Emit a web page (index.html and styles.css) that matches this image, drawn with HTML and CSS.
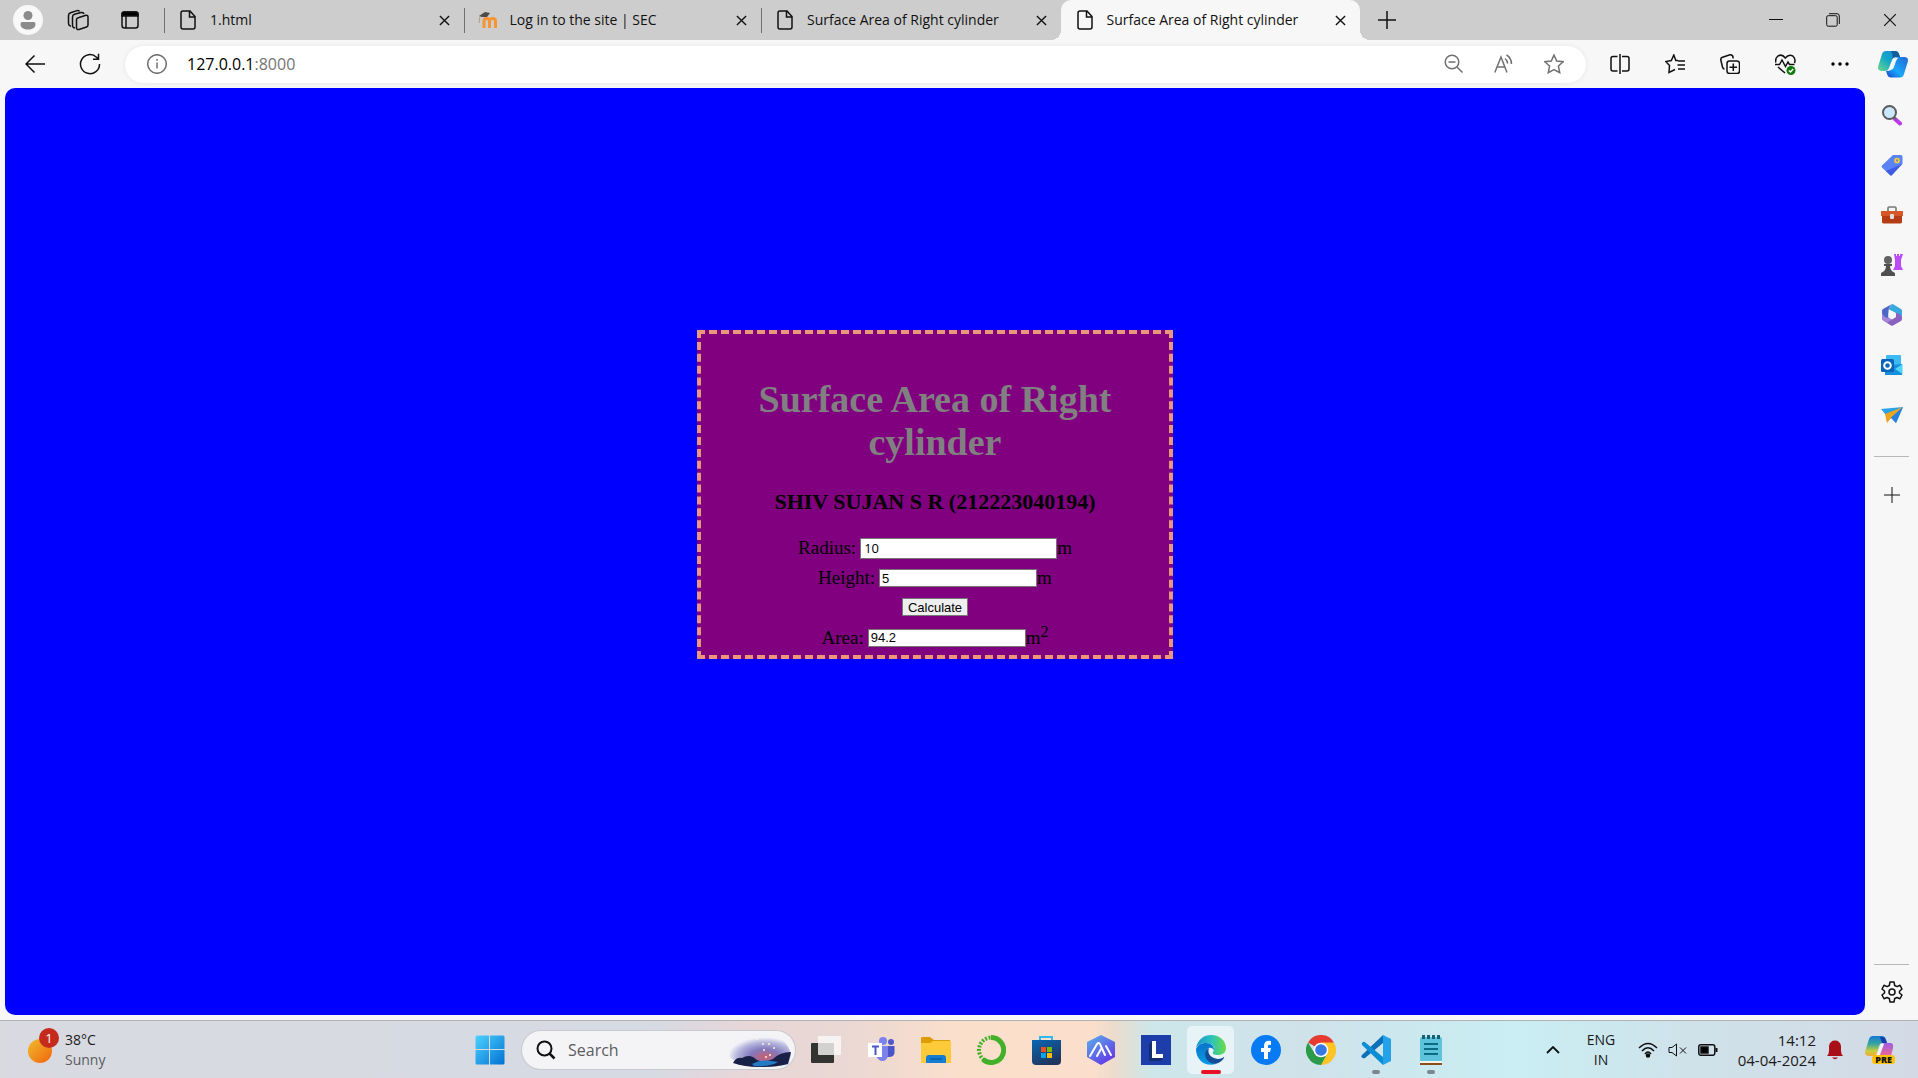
FILE: index.html
```html
<!DOCTYPE html>
<html lang="en">
<head>
<meta charset="utf-8">
<title>Surface Area of Right cylinder</title>
<link rel="stylesheet" href="styles.css">
</head>
<body>
<svg class="defs" aria-hidden="true">
  <symbol id="file" viewBox="0 0 16 20"><path d="M3 1H10L15 6.500V17Q15 19 13 19H3Q1 19 1 17V3Q1 1 3 1ZM9.500 1V7H15"/></symbol>
  <symbol id="cross" viewBox="0 0 12 12"><path d="M1 1 11 11M11 1 1 11"/></symbol>
  <linearGradient id="cp1" x1="0" y1="1" x2="1" y2="0"><stop offset="0" stop-color="#6bd98a"/><stop offset=".5" stop-color="#12a6c9"/><stop offset="1" stop-color="#1689d8"/></linearGradient>
  <linearGradient id="cp2" x1="0" y1="1" x2="1" y2="0"><stop offset="0" stop-color="#1743d1"/><stop offset=".4" stop-color="#19a8f8"/><stop offset="1" stop-color="#2267d4"/></linearGradient>
</svg>

<header class="tabs">
  <div class="tab-tools">
    <button class="profile" aria-label="Profile"><svg width="30" height="30" viewBox="0 0 30 30"><circle cx="15" cy="15" r="15" fill="#f8f8f8"/><circle cx="15" cy="10.500" r="4.500" fill="#8b8b8b"/><path d="M9 17H21Q22.500 17 22.500 19C22.500 23 19 24.500 15 24.500S7.500 23 7.500 19Q7.500 17 9 17Z" fill="#8b8b8b"/></svg></button>
    <button aria-label="Workspaces"><svg class="line" width="22" height="22" viewBox="0 0 22 22"><path d="M12 8.500 19 6.300Q21 6 21 8V16Q21 17.500 19.500 18L12 20.500Q9.500 21 9.500 18.500V10.500Q9.500 9.200 12 8.500ZM8 19 6.500 18.500Q5.500 18 5.500 16V8Q5.500 6 7.500 5.300L14 3.500Q16.500 3 17 5M4 17.500 2.500 16.500Q1.500 16 1.500 14V6.500Q1.500 4.500 3.500 3.800L10 1.600Q12 1 12.500 2.500"/></svg></button>
    <button aria-label="Tab actions"><svg class="line" width="18" height="18" viewBox="0 0 18 18"><rect x="1" y="1" width="16" height="16" rx="2.500"/><path d="M1 3Q1 1 3 1H15Q17 1 17 3V5H1Z" fill="#000"/><path d="M5 5V17"/></svg></button>
  </div>
  <nav class="tab-list">
    <div class="tab"><svg class="line" width="16" height="20"><use href="#file"/></svg><a href="#">1.html</a><button aria-label="Close tab"><svg class="line" width="11" height="11"><use href="#cross"/></svg></button></div>
    <div class="tab"><svg width="20" height="16" viewBox="0 0 20 16"><path d="M6 16V9Q6 6.500 8.500 6.500T11.500 9V16M11.500 16V9Q11.500 6.500 14.500 6.500T17.500 9V16" fill="none" stroke="#f79433" stroke-width="3"/><path d="M1 4 7 0 12 1 9 5 4 5Z" fill="#504b48"/><path d="M2 4 1 11" stroke="#aaa08e"/></svg><a href="#">Log in to the site | SEC</a><button aria-label="Close tab"><svg class="line" width="11" height="11"><use href="#cross"/></svg></button></div>
    <div class="tab"><svg class="line" width="16" height="20"><use href="#file"/></svg><a href="#">Surface Area of Right cylinder</a><button aria-label="Close tab"><svg class="line" width="11" height="11"><use href="#cross"/></svg></button></div>
    <div class="tab active"><svg class="line" width="16" height="20"><use href="#file"/></svg><a href="#">Surface Area of Right cylinder</a><button aria-label="Close tab"><svg class="line" width="11" height="11"><use href="#cross"/></svg></button></div>
  </nav>
  <button class="new-tab" aria-label="New tab"><svg class="line" width="18" height="18" viewBox="0 0 18 18"><path d="M9 0V18M0 9H18"/></svg></button>
  <div class="window-tools">
    <button aria-label="Minimize"><svg class="line thin" width="14" height="14"><path d="M0 6.500H14"/></svg></button>
    <button aria-label="Restore"><svg class="line thin" width="14" height="14" viewBox="0 0 14 14"><rect x=".7" y="2.700" width="10.500" height="10.500" rx="1.500"/><path d="M3 .7H11Q13.300 .7 13.300 3V11"/></svg></button>
    <button aria-label="Close"><svg class="line thin" width="14" height="14"><use href="#cross"/></svg></button>
  </div>
</header>

<div class="toolbar">
  <button class="back" aria-label="Back"><svg class="line" width="20" height="18" viewBox="0 0 20 18"><path d="M20 9H1M9.500 .5 1 9 9.500 17.500"/></svg></button>
  <button class="reload" aria-label="Reload"><svg class="line" width="22" height="22" viewBox="0 0 22 22"><path d="M20.500 11A9.500 9.500 0 1 1 17.500 4.200L19.500 6M19.500 .8V6.200H14"/></svg></button>
  <div class="address">
    <svg class="line gray" width="20" height="20" viewBox="0 0 20 20"><circle cx="10" cy="10" r="9.300"/><path d="M10 8.500V14.500M10 5V6.700"/></svg>
    <a class="url" href="#">127.0.0.1<span>:8000</span></a>
    <button aria-label="Zoom"><svg class="line gray" width="20" height="20" viewBox="0 0 20 20"><circle cx="8" cy="8" r="6.800"/><path d="M4.500 8H11.500M13 13 18.500 18.500"/></svg></button>
    <button aria-label="Read aloud"><svg class="line gray" width="20" height="20" viewBox="0 0 20 20"><path d="M.8 18.500 7 3 13 18.500M3 13H11M11 4.500Q13.500 6.500 13.500 9.500M12.500 1Q17.500 4 17.500 10"/></svg></button>
    <button aria-label="Favorite"><svg class="line gray" width="20" height="20" viewBox="0 0 20 20"><path d="M10 1 12.700 7 19.200 7.700 14.400 12 15.700 18.700 10 15.500 4.300 18.700 5.600 12 .8 7.700 7.300 7Z"/></svg></button>
  </div>
  <div class="tools">
    <button aria-label="Split screen"><svg class="line" width="20" height="20" viewBox="0 0 20 20"><path d="M7.500 2.500H3Q1 2.500 1 4.500V15Q1 17 3 17H7.500M12 2.500H17Q19 2.500 19 4.500V15Q19 17 17 17H12M10 0V20"/></svg></button>
    <button aria-label="Favorites"><svg class="line" width="20" height="20" viewBox="0 0 20 20"><path d="M13 6.500 10.800 6.500 8.800 1 6.300 6.500 .8 7.500 4.500 11.500 4 18.500 10 15.500M13 7H20M12.500 11H20M13 15H20"/></svg></button>
    <button aria-label="Collections"><svg class="line" width="20" height="20" viewBox="0 0 20 20"><rect x="7" y="7" width="12.500" height="12.500" rx="2.500"/><path d="M13.300 9.500V17M9.500 13.300H17M4.500 15Q3 15 2.500 13L.8 6Q.5 4 2.500 3.300L10 .8Q12.500 .5 13 3V4.500"/></svg></button>
    <button aria-label="Browser essentials"><svg class="line" width="21" height="21" viewBox="0 0 21 21"><path d="M.8 8.500Q0 4 3 2 7-.5 10.300 4 14-.5 18 2.200 21 5 19.500 9M0 10.500H4.500L7 6 10.500 12.500 13 8 14.500 10.500H19.500M3 13 10 19"/><circle cx="16" cy="16.500" r="4.500" fill="#107c10" stroke="none"/><path d="M14 16.500 15.500 18 18.200 15" stroke="#fff"/></svg></button>
    <button aria-label="Settings and more"><svg width="18" height="4" viewBox="0 0 18 4"><circle cx="2" cy="2" r="1.700"/><circle cx="9" cy="2" r="1.700"/><circle cx="16" cy="2" r="1.700"/></svg></button>
  </div>
  <button class="copilot" aria-label="Copilot"><svg width="30" height="27" viewBox="0 0 30 27"><path d="M8 0H17Q20 0 21 3L22 6H18Q15 6 14 9L11 17Q10 20 7 20H4Q-1 20 .3 15L4 3Q5 0 8 0Z" fill="url(#cp1)"/><path d="M13 0H17Q20 0 21 3L22 6H18Q15 6 14 9L13 12Q16 5 13 0Z" fill="#135c9e"/><path d="M22 6H26Q31 6 29.700 11L26 23Q25 26.500 22 26.500H13Q10 26.500 9 23L8 20Q11 20 12 17L16 8Q17 6 22 6Z" fill="url(#cp2)"/><path d="M19 7H20Q18 9 17 13L16 16Q15 19 12 19.500 10 20 8 20 10.500 20 11.500 17L14.500 9Q15 7 19 7Z" fill="#f5fbff"/></svg></button>
</div>

<div class="view">
  <main class="page">
    <section class="card">
      <h1>Surface Area of Right cylinder</h1>
      <h3>SHIV SUJAN S R (212223040194)</h3>
      <form onsubmit="return false">
        <div class="row"><label for="radius">Radius:</label><input id="radius" class="wide" type="text" value="10"><span>m</span></div>
        <div class="row"><label for="height">Height:</label><input id="height" type="text" value="5"><span>m</span></div>
        <button class="calculate">Calculate</button>
        <div class="row area"><label for="area">Area:</label><input id="area" type="text" value="94.2"><span>m<sup>2</sup></span></div>
      </form>
    </section>
  </main>
  <aside class="sidebar">
    <button aria-label="Search"><svg width="22" height="22" viewBox="0 0 22 22"><path d="M14 15 19 19.500" stroke="#bd37ed" stroke-width="4" stroke-linecap="round"/><path d="M12 12 15 15" stroke="#666" stroke-width="2"/><circle cx="8.500" cy="8.500" r="6.500" fill="#c9e8fb" stroke="#5b5b5b" stroke-width="2"/></svg></button>
    <button aria-label="Shopping"><svg width="22" height="22" viewBox="0 0 22 22"><path d="M12 1H20Q21.500 1 21.500 3V10L11 21Q10 22 9 21L1 13.500Q0 12.500 1 11.500Z" fill="#5a83f5"/><path d="M21 10 11 21Q10 22 9 21L5 17Z" fill="#3f5be6"/><circle cx="16" cy="6.500" r="2" fill="#7988b8" stroke="#f5cd3c" stroke-width="1.700"/></svg></button>
    <button aria-label="Tools"><svg width="22" height="22" viewBox="0 0 22 22"><path d="M7 7V4Q7 3 8 3H14Q15 3 15 4V7" fill="none" stroke="#777" stroke-width="1.600"/><path d="M0 7H22V12H0Z" fill="#d75727"/><path d="M1 12H21V18Q21 19.500 19 19.500H3Q1 19.500 1 18Z" fill="#b53d16"/><rect x="9" y="10" width="4" height="5" rx="1" fill="#ddd"/></svg></button>
    <button aria-label="Games"><svg width="22" height="22" viewBox="0 0 22 22"><path d="M13 0H15V2H16V0H18V2H19V0H22L20 6V12L22 16H12L14 12V6Z" fill="#bb4bf5"/><circle cx="7" cy="6" r="4" fill="#626262"/><path d="M3 10H11V12H9Q9 17 14 19V22H0V19Q5 17 5 12H3Z" fill="#505050"/></svg></button>
    <button aria-label="Microsoft 365"><svg width="22" height="22" viewBox="0 0 22 22"><path d="M11 0Q12 0 13 .8L20 5Q21 5.500 21 7V13L14.500 9 7.500 5Z" fill="#38a9df"/><path d="M11 0Q7.500 3 7.500 8V14L3 17Q1 16 1 14V7Q1 5.500 2 5Z" fill="#4e66c8"/><path d="M21 9V15Q21 16.500 20 17L12 21.500Q11 22 10 21.500L3 17 8 14 11 15.500 15 13V9Q19 9 21 13Z" fill="#8a62c0"/><path d="M1 9Q3 14 8 14L11 15.500 6 18.500 2 16Q1 15.500 1 14Z" fill="#a987d8"/><path d="M11 7 14.500 9V13L11 15 7.500 13V9Z" fill="#f7f7f7"/></svg></button>
    <button aria-label="Outlook"><svg width="22" height="22" viewBox="0 0 22 22"><rect x="5" y="1" width="15" height="14" rx="1" fill="#3dbaf1"/><path d="M4 12 21 10V21H4Z" fill="#168fdc"/><path d="M14 15 21.500 10V20Z" fill="#50d4fa"/><rect x="0" y="5" width="13" height="13" rx="1.500" fill="#0865b9"/><circle cx="6.500" cy="11.500" r="3.300" fill="none" stroke="#fff" stroke-width="2"/></svg></button>
    <button aria-label="Drop"><svg width="22" height="22" viewBox="0 0 22 22"><path d="M0 5 22 3 15 19 10 14 6 18 5 11Z" fill="#28a3e8"/><path d="M4 10 22 3 10 14 6 19Z" fill="#eda51c"/><path d="M22 3 15 19 10 13.500Z" fill="#277fe0"/></svg></button>
    <hr>
    <button aria-label="Add"><svg class="line thin" width="16" height="16" viewBox="0 0 16 16"><path d="M8 0V16M0 8H16"/></svg></button>
    <hr class="push">
    <button class="settings" aria-label="Settings"><svg class="line" width="22" height="22" viewBox="0 0 22 22"><path d="M9 1H13L13.700 4.500 16 5.600 19 4.300 21 8 18.500 10.200V12L21 14 19 17.700 16 16.500 13.700 17.500 13 21H9L8.300 17.500 6 16.500 3 17.700 1 14 3.500 12V10L1 8 3 4.300 6 5.600 8.300 4.500Z" stroke-linejoin="round"/><circle cx="11" cy="11" r="3"/></svg></button>
  </aside>
</div>

<footer class="taskbar">
  <button class="weather"><svg width="34" height="40" viewBox="0 0 34 40"><defs><linearGradient id="sun" x2="1" y2="1"><stop stop-color="#efbd2e"/><stop offset="1" stop-color="#f2630c"/></linearGradient></defs><circle cx="13" cy="21" r="12" fill="url(#sun)"/></svg><span class="badge">1</span><span class="two">38°C<br><i>Sunny</i></span></button>
  <div class="apps">
    <button class="app" aria-label="Start"><svg width="30" height="30" viewBox="0 0 30 30"><defs><linearGradient id="win" gradientUnits="userSpaceOnUse" x2="30" y2="30"><stop stop-color="#4fd3ff"/><stop offset="1" stop-color="#0070d2"/></linearGradient></defs><path d="M2 .5H14V14H.5V2Q.5 .5 2 .5ZM15 .5H28Q29.500 .5 29.500 2V14H15ZM.5 15H14V29.500H2Q.5 29.500 .5 28ZM15 15H29.500V28Q29.500 29.500 28 29.500H15Z" fill="url(#win)"/></svg></button>
    <label class="search"><svg class="line" width="20" height="20" viewBox="0 0 20 20"><circle cx="8.500" cy="8.500" r="7" stroke-width="2"/><path d="M13.500 13.500 18.500 18.500" stroke-width="2.500"/></svg><input type="text" placeholder="Search" aria-label="Search">
      <svg width="64" height="34" viewBox="0 0 64 34"><defs><radialGradient id="sky" cx=".58" cy=".7" r=".6"><stop stop-color="#c95e70"/><stop offset=".4" stop-color="#8279bd"/><stop offset=".75" stop-color="#b5b5dc"/><stop offset="1" stop-color="#f2f2f8"/></radialGradient></defs><path d="M1 24Q5 1 32 1T63 22L60 31Q50 34 32 34T1 24Z" fill="url(#sky)"/><path d="M5 30Q8 24 14 25 22 20 29 27 36 30 45 26 52 19 63 19L60 31Q48 34 32 34T5 30Z" fill="#192048"/><path d="M24 31Q34 25 50 29 42 34 26 33Z" fill="#227bc2"/><g fill="#fff0d4"><circle cx="29" cy="6" r="1"/><circle cx="35" cy="11" r="1"/><circle cx="41" cy="11" r="1"/><circle cx="36" cy="17" r="1"/><circle cx="42" cy="22" r="1"/><circle cx="46" cy="15" r="1"/><circle cx="38" cy="24" r="1"/></g></svg></label>
    <button class="app" aria-label="Task view"><svg width="30" height="30" viewBox="0 0 30 30"><rect x="0" y="8" width="23" height="20" rx="1" fill="#333331"/><rect x="7" y="1" width="23" height="19" rx="1" fill="#fafafa" fill-opacity=".8"/></svg></button>
    <button class="app" aria-label="Teams"><svg width="30" height="30" viewBox="0 0 30 30"><circle cx="17" cy="6" r="4" fill="#7b83eb"/><circle cx="25" cy="7" r="3" fill="#5059c9"/><path d="M19 11H28.500V18Q28 22 23 22H19Z" fill="#4c55c7"/><path d="M10 11H22V20Q21 26 16.500 26T10 20Z" fill="#7b83eb"/><rect x="2" y="8" width="14" height="14" fill="#fff"/><path d="M6 11.500H13M9.500 11.500V20" stroke="#4e57c6" stroke-width="2"/></svg></button>
    <button class="app" aria-label="File Explorer"><svg width="30" height="30" viewBox="0 0 30 30"><path d="M0 3Q0 2 2 2H9L13 5H29V12H0Z" fill="#dc9c06"/><path d="M0 8H9L12 6H30V28H0Z" fill="#fdcb39"/><path d="M5 28V23Q5 20 8 20H22Q25 20 25 23V28Z" fill="#147fd2"/><path d="M9 24H21" stroke="#075ca4" stroke-width="1.500"/></svg></button>
    <button class="app" aria-label="Anaconda"><svg width="30" height="30" viewBox="0 0 30 30"><path d="M15 2.500A12.500 12.500 0 1 1 7 24.500" fill="none" stroke="#43b02a" stroke-width="5"/><path d="M8 25A12.500 12.500 0 0 1 15 2.500" fill="none" stroke="#43b02a" stroke-width="4" stroke-dasharray="2 1.500"/></svg></button>
    <button class="app" aria-label="Store"><svg width="30" height="30" viewBox="0 0 30 30"><defs><linearGradient id="store" x2=".5" y2="1"><stop stop-color="#0867b4"/><stop offset="1" stop-color="#20365f"/></linearGradient></defs><path d="M9 6V2H21V6" fill="none" stroke="#31baf0" stroke-width="2"/><path d="M1 5H30V26Q30 30 26 30H5Q1 30 1 26Z" fill="url(#store)"/><path d="M10 12H15V17H10Z" fill="#f25022"/><path d="M16 12H21V17H16Z" fill="#7fba00"/><path d="M10 18H15V23H10Z" fill="#00a4ef"/><path d="M16 18H21V23H16Z" fill="#ffb900"/></svg></button>
    <button class="app" aria-label="AI app"><svg width="30" height="30" viewBox="0 0 30 30"><defs><linearGradient id="ai" x2=".7" y2="1"><stop stop-color="#58b2ea"/><stop offset="1" stop-color="#6338e8"/></linearGradient></defs><path d="M15 0 29 7V22L15 30 1 22V7Z" fill="url(#ai)"/><path d="M4 21 11 9Q12 7 14 9L19 20M11 21 15 14M20 11 25 20" fill="none" stroke="#fff" stroke-width="2" stroke-linecap="round"/></svg></button>
    <button class="app" aria-label="L app"><svg width="30" height="30" viewBox="0 0 30 30"><path d="M0 0H30V30H0Z" fill="#1c3daa"/><path d="M8 9 11 6V23H22L20 26H8Z" fill="#112e70"/><path d="M11 6H15V19H22V23H11Z" fill="#fff"/></svg></button>
    <button class="app current" aria-label="Edge"><svg width="30" height="30" viewBox="0 0 30 30"><defs><linearGradient id="edge1" y2="0"><stop stop-color="#1793cf"/><stop offset=".5" stop-color="#2bc0bf"/><stop offset="1" stop-color="#69df46"/></linearGradient><linearGradient id="edge2" x2="0" y2="1"><stop stop-color="#0873c9"/><stop offset="1" stop-color="#0b9ce5"/></linearGradient></defs><path d="M0 13C2 4 8 0 15 0C24 0 30 6 30 13C30 18 26 20 22 20C18 20 16 19 17 17C20 12 16 8 10 8C5 8 2 10 0 13Z" fill="url(#edge1)"/><path d="M0 14C2 10 5 8 10 8C15 8 18 11 18 15C14 10 10 14 10 18C10 24 15 27 20 29C10 32 0 26 0 14Z" fill="url(#edge2)"/><path d="M13 13C9 15 8 20 11 25C14 29 20 30 24 27C27 25 29 22 28 22C24 25 19 24 16 22C12 19 12 16 13 13Z" fill="#134d97"/></svg></button>
    <button class="app" aria-label="Facebook"><svg width="30" height="30" viewBox="0 0 30 30"><circle cx="15" cy="15" r="15" fill="#087bf4"/><path d="M13 24V17H10V13H13V11Q13 5 20 6V10Q17 9 17 11V13H20L19 17H17V24Z" fill="#fff"/></svg></button>
    <button class="app" aria-label="Chrome"><svg width="30" height="30" viewBox="0 0 30 30"><path d="M15 15 2 7.500A15 15 0 0 1 28 7.500Z" fill="#e53b30"/><path d="M15 15V7.500H28A15 15 0 0 1 15 30L21.500 18Z" fill="#fdc423"/><path d="M15 30A15 15 0 0 1 2 7.500L9 19 15 22 21 19Z" fill="#2b9a49"/><circle cx="15" cy="15" r="7.300" fill="#fff"/><circle cx="15" cy="15" r="5.800" fill="#3678e5"/></svg></button>
    <button class="app open" aria-label="Visual Studio Code"><svg width="30" height="30" viewBox="0 0 30 30"><path d="M22 0 22 8 4 23Q2 24 .5 22 0 21 1 20Z" fill="#0b70b7"/><path d="M1 10Q0 8 2 7 3 6 5 8L22 22V30Z" fill="#0b8ed4"/><path d="M22 0 30 4V26L22 30Z" fill="#23a2ea"/></svg></button>
    <button class="app open" aria-label="Notepad"><svg width="30" height="30" viewBox="0 0 30 30"><rect x="4" y="2" width="22" height="25" rx="2" fill="#5dc3dc"/><path d="M4 27H26V30H4Z" fill="#8b4c1a"/><path d="M4 26H26V28H4Z" fill="#f5f2ea"/><path d="M8 9H22M8 14H22M8 19H22" stroke="#0a6b83" stroke-width="2"/><path d="M7.500 0V4M12.500 0V4M17.500 0V4M22.500 0V4" stroke="#176073" stroke-width="3"/></svg></button>
  </div>
  <div class="tray">
    <button aria-label="Hidden icons"><svg class="line" width="14" height="8" viewBox="0 0 14 8"><path d="M1 7 7 1 13 7" stroke-width="1.800"/></svg></button>
    <button class="two lang">ENG<br>IN</button>
    <button class="status" aria-label="Network, volume, battery"><svg class="line" width="20" height="16" viewBox="0 0 20 16"><path d="M1 6Q10-3 19 6M4 9Q10 2.500 16 9M7 12Q10 8 13 12"/><circle cx="10" cy="13.500" r="1.500" fill="#000"/></svg><svg class="line thin" width="20" height="14" viewBox="0 0 20 14"><path d="M1 4.500H4L8.500 1V13L4 9.500H1ZM12 4.500 18 10.500M18 4.500 12 10.500"/></svg><svg class="line" width="20" height="12" viewBox="0 0 20 12"><rect x=".8" y=".8" width="16" height="10.500" rx="2"/><rect x="3" y="3" width="7" height="6" fill="#000"/><path d="M18.500 4V8" stroke-width="2"/></svg></button>
    <button class="two clock">14:12<br>04-04-2024</button>
    <button aria-label="Notifications"><svg width="18" height="20" viewBox="0 0 18 20"><path d="M1 16Q3 14 3 11V6Q4 .5 9 .5T15 6V11Q15 14 17 16Z" fill="#a80f16"/><path d="M6 17.500H12Q9 21 6 17.500Z" fill="#a80f16"/></svg></button>
    <button class="pre" aria-label="Copilot preview"><svg width="30" height="28" viewBox="0 0 30 28"><defs><linearGradient id="pr1" x2="0" y2="1"><stop stop-color="#1579d8"/><stop offset=".4" stop-color="#39a69b"/><stop offset=".75" stop-color="#c9cf3d"/><stop offset="1" stop-color="#f4a83a"/></linearGradient><linearGradient id="pr2" x2="0" y2="1"><stop stop-color="#9b5de5"/><stop offset="1" stop-color="#f06990"/></linearGradient></defs><path d="M8 0H17Q20 0 21 4L22 7H17Q15 7 14 10L11 20H4Q-1 20 .3 15L4 3Q5 0 8 0Z" fill="url(#pr1)"/><path d="M15 1H18Q20 1 21 4L22 7H17Z" fill="#173fae"/><path d="M20 7H25Q29 7 28 12L26 20H13L17 9Q18 7 20 7Z" fill="url(#pr2)"/><path d="M16 8H19L14.500 20H11Z" fill="#f4f2fa"/></svg><span>PRE</span></button>
  </div>
</footer>
</body>
</html>
```
FILE: styles.css
```css
* { box-sizing: border-box; }
body {
  margin: 0;
  min-height: 100vh;
  display: flex;
  flex-direction: column;
  background: #f7f7f7;
  color: #1a1a1a;
  font: 14px/20px "Open Sans", sans-serif;
}
button { border: 0; padding: 0; background: none; font: inherit; color: inherit; display: grid; place-items: center; }
a { color: inherit; text-decoration: none; }
svg { display: block; flex: none; }
.defs { position: absolute; width: 0; height: 0; }
.line { fill: none; stroke: #111; stroke-width: 1.500; }
.thin { stroke-width: 1; }
.gray { stroke: #707070; }

/* Tab strip */
.tabs { display: flex; height: 40px; background: #cdcdcd; }
.tab-tools { display: flex; align-items: center; gap: 24px; width: 164px; padding-left: 13px; }
.tab-tools button:last-child { margin-left: 8px; }
.tab-list { display: flex; flex: 0 1 1196px; min-width: 0; }
.tab { position: relative; display: flex; align-items: center; flex: 1 1 0; min-width: 0; padding: 0 14px 0 16px; gap: 14px; }
.tab a { flex: 1; white-space: nowrap; overflow: hidden; font-size: 14px; color: #111; }
.tab:not(.active)::before { content: ""; position: absolute; left: 0; top: 8px; width: 1px; height: 25px; background: #707070; }
.tab:nth-child(2) { padding-left: 14px; gap: 12px; }
.tab.active { background: #f7f7f7; border-radius: 10px 10px 0 0; }
.tab.active::before, .tab.active::after {
  content: ""; position: absolute; bottom: 0; width: 10px; height: 10px;
}
.tab.active::before { left: -10px; background: radial-gradient(circle at 0 0, #cdcdcd 10px, #f7f7f7 10px); }
.tab.active::after { right: -10px; background: radial-gradient(circle at 100% 0, #cdcdcd 10px, #f7f7f7 10px); }
.new-tab { margin-left: 18px; }
.window-tools { display: flex; margin-left: auto; }
.window-tools button { width: 57px; }

/* Address bar */
.toolbar { display: flex; align-items: center; height: 48px; padding: 0 10px 0 25px; }
.reload { margin: 0 24px 0 34px; }
.address { display: flex; flex: 1; align-items: center; height: 37px; padding: 0 22px; gap: 30px; border-radius: 19px; background: #fff; box-shadow: 0 0 4px #e4e4e4; }
.url { flex: 1; margin-left: -10px; font-size: 16px; color: #000; }
.url span { color: #757575; }
.tools { display: flex; gap: 35px; padding: 0 29px 0 24px; }

/* Web page */
.view { display: flex; flex: 1; padding: 0 0 5px 5px; }
.page {
  flex: 1;
  padding-top: 242px;
  border-radius: 10px;
  background: #00f;
  color: #000;
  font: 19px/22px "Liberation Serif", serif;
}
.card {
  max-width: 476px;
  margin: 0 auto;
  padding: 44px 0 4px;
  border: 4px dashed #e9967a;
  background: #800080;
  text-align: center;
}
.card h1 { margin: 0 0 25px; font-size: 38px; line-height: 43px; color: #808080; }
.card h3 { margin: 0 0 23px; font-size: 22px; line-height: 25px; }
.card form { display: flex; flex-direction: column; align-items: center; gap: 8px; }
.row { display: flex; align-items: center; height: 22px; }
.row input {
  width: 158px; height: 18px; margin-left: 4px; padding: 0 2px;
  border: 1px solid #767676; background: #fff; color: #000;
  font: 13px/15px "Liberation Sans", sans-serif;
}
.row .wide { width: 197px; height: 21px; padding: 0 3px; font-family: "Open Sans", sans-serif; }
.area { margin-top: 3px; padding-bottom: 1px; }
.row sup { font-size: 16px; line-height: 0; }
.calculate { width: 66px; height: 18px; margin-top: 1px; border: 1px solid #767676; background: #efefef; color: #000; font: 13px/15px "Liberation Sans", sans-serif; }
.card form { padding-bottom: 2px; }

/* Side bar */
.sidebar { display: flex; flex-direction: column; align-items: center; gap: 28px; width: 53px; padding-top: 16px; }
.sidebar hr { width: 35px; height: 1px; margin: 2px 0; border: 0; background: #b8b8b8; }
.sidebar .push { margin: auto 0 -12px; }
.settings { margin-bottom: 12px; }

/* Taskbar */
.taskbar {
  display: grid;
  grid-template-columns: 1fr auto 1fr;
  align-items: center;
  height: 58px;
  border-top: 1px solid #b0b2b6;
  background: linear-gradient(90deg, #d8dae0 0%, #d6dae3 34%, #e8d6d8 39%, #ead8d4 44%, #fadfcb 50%, #fbdfcc 57%, #eddccb 58%, #cde7ea 60%, #cfe2ea 68%, #c9eef3 79%, #cfe2ea 88%, #d3dae6 100%);
}
.two { font-size: 14px; line-height: 20px; text-align: left; }
.weather { position: relative; display: flex; justify-self: start; align-items: center; gap: 4px; padding-left: 27px; }
.weather i { font-style: normal; color: #5b5d61; }
.badge { position: absolute; left: 39px; top: -2px; width: 20px; height: 20px; border-radius: 50%; background: #c42b1c; color: #fff; font-size: 13px; }
.apps { display: flex; align-items: center; padding-left: 2px; }
.app { position: relative; width: 55px; height: 48px; }
.app.current { width: 47px; margin: 0 4px; border-radius: 5px; background: #e8f3f8; }
.app.current::after, .app.open::after { content: ""; position: absolute; bottom: 0; width: 8px; height: 4px; border-radius: 2px; background: #7a878c; }
.app.current::after { width: 20px; background: #e81123; }
.search { display: flex; align-items: center; width: 273px; height: 38px; margin: 0 3px 0 5px; padding: 0 3px 0 14px; gap: 12px; border-radius: 19px; background: #f4f4f7; box-shadow: 0 0 0 1px #c9cacf; }
.search input { flex: 1; min-width: 0; padding: 0; border: 0; background: none; font: 16px/22px "Open Sans", sans-serif; }
.search input::placeholder { color: #5c5c60; opacity: 1; }
.tray { display: flex; justify-self: end; align-items: center; padding-right: 23px; }
.lang { width: 34px; margin: 0 20px 0 24px; text-align: center; }
.status { display: flex; gap: 10px; }
.clock { width: 84px; margin: 0 10px 0 14px; font-size: 15px; text-align: right; place-items: center end; }
.pre { position: relative; margin-left: 21px; }
.pre span { position: absolute; right: 0; bottom: 0; padding: 0 3px; border-radius: 3px; background: #ffc20e; color: #111; font-size: 9px; font-weight: 800; line-height: 9px; }
```
